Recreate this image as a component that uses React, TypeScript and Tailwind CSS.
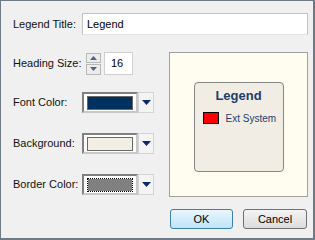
import React from "react";

// Small dropdown arrow used in the color pickers
function Arrow() {
  return (
    <svg width="9" height="5" viewBox="0 0 9 5">
      <path d="M0 0 H9 L4.5 5 Z" fill="#0b2a6b" />
    </svg>
  );
}

function ColorPicker({ color, focused }: { color: string; focused?: boolean }) {
  return (
    <div className="flex h-[21px] w-[72px]">
      <div className="flex flex-1 items-center border-2 border-t-[#808080] border-l-[#808080] border-b-[#c8c8c8] border-r-[#c8c8c8] bg-white px-[3px]">
        <div
          className={
            "h-[14px] w-full bg-clip-padding " +
            (focused ? "border border-dotted border-black" : "border border-[#6a6a6a]")
          }
          style={{ backgroundColor: color }}
        />
      </div>
      <div className="flex w-[16px] items-center justify-center border border-[#d4d4d4] bg-[#f4f4f4]">
        <Arrow />
      </div>
    </div>
  );
}

function Spinner() {
  return (
    <div className="flex h-[22px] w-[15px] flex-col gap-[1px]">
      <div className="flex flex-1 items-center justify-center border border-[#b8b8b8] bg-[#ececec]">
        <svg width="7" height="4" viewBox="0 0 7 4">
          <path d="M0 4 L3.5 0 L7 4 Z" fill="#4f6487" />
        </svg>
      </div>
      <div className="flex flex-1 items-center justify-center border border-[#b8b8b8] bg-[#ececec]">
        <svg width="7" height="4" viewBox="0 0 7 4">
          <path d="M0 0 H7 L3.5 4 Z" fill="#4f6487" />
        </svg>
      </div>
    </div>
  );
}

export default function App() {
  const label = "w-[69px] text-[11px] text-[#111]";

  return (
    <div
      className="flex h-[240px] w-[315px] flex-col border border-r-2 border-b-2 border-[#6f7a87] bg-[#f0f0f0]"
      style={{ fontFamily: '"Liberation Sans", Arial, sans-serif' }}
    >
      {/* title row */}
      <div className="mt-[12px] flex h-[22px] items-center pl-[12px] pr-[5px]">
        <span className={label}>Legend Title:</span>
        <div className="flex h-[22px] flex-1 items-center border border-[#c3c3c3] border-b-[#e3e3e3] bg-white pl-[4px] text-[11px]">
          Legend
        </div>
      </div>

      <div className="mt-[17px] flex pl-[12px] pr-[5px]">
        {/* left form column */}
        <div className="flex w-[156px] flex-col">
          <div className="flex h-[23px] items-center">
            <span className="w-[73px] text-[11px] text-[#111]">Heading Size:</span>
            <Spinner />
            <div className="ml-[3px] flex h-[23px] w-[29px] items-center border border-[#d0d0d0] bg-white pl-[6px] text-[11px]">
              16
            </div>
          </div>
          <div className="mt-[17px] flex h-[21px] items-center">
            <span className={label}>Font Color:</span>
            <ColorPicker color="#00305f" />
          </div>
          <div className="mt-[20px] flex h-[21px] items-center">
            <span className={label}>Background:</span>
            <ColorPicker color="#f3efe6" />
          </div>
          <div className="mt-[20px] flex h-[21px] items-center">
            <span className={label}>Border Color:</span>
            <ColorPicker color="#808080" focused />
          </div>
        </div>

        {/* preview */}
        <div className="flex h-[145px] flex-1 justify-center border border-[#a0a0a0] bg-[#fffcf0]">
          <div className="mt-[29px] flex h-[90px] w-[90px] flex-col items-center rounded-[4px] border border-[#868686] bg-[#f1ede4]">
            <div className="mt-[3px] text-[13px] font-bold text-[#1e3d6b]">Legend</div>
            <div className="mt-[5px] flex w-full items-center pl-[8px]">
              <div className="h-[12px] w-[16px] border border-black bg-[#ff0000]" />
              <span className="ml-[7px] text-[10px] text-[#1e3d6b]">Ext System</span>
            </div>
          </div>
        </div>
      </div>

      {/* buttons */}
      <div className="mt-[12px] flex justify-end gap-[10px] pr-[6px]">
        <button className="h-[20px] w-[63px] rounded-[3px] border border-[#3c7fb1] bg-gradient-to-b from-[#eaf6fd] to-[#bee4f8] text-[11px] text-black">
          OK
        </button>
        <button className="h-[20px] w-[64px] rounded-[3px] border border-[#707070] bg-gradient-to-b from-[#f4f4f4] to-[#dcdcdc] text-[11px] text-black">
          Cancel
        </button>
      </div>
    </div>
  );
}
